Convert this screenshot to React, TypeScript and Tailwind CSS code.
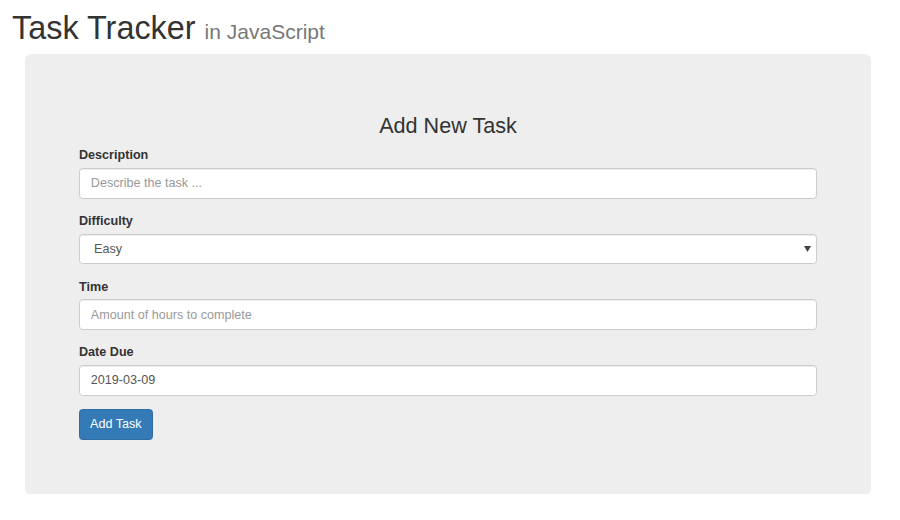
export default function App() {
  const inputCls =
    "block w-full h-[30.6px] px-[10.8px] text-[12.6px] text-[#555] bg-white border border-[#ccc] rounded-[3.6px] shadow-[inset_0_1px_1px_rgba(0,0,0,0.075)] placeholder:text-[#999] outline-none";
  const labelCls = "block mb-[3px] text-[12.6px] leading-[18.6px] font-bold text-[#333]";

  return (
    <div className="w-[900px] h-[520px] bg-white font-['Liberation_Sans',Arial,sans-serif] text-[#333]">
      <h1 className="pl-[12px] pt-[11px] text-[32.4px] leading-[1.1] text-[#333]">
        Task Tracker <span className="text-[21px] text-[#777]">in JavaScript</span>
      </h1>

      <div className="mx-[25px] mt-[7.36px] w-[846px] rounded-[5.4px] bg-[#eee] px-[54px] pt-[60px] pb-[54.4px]">
        <h3 className="mb-[8.64px] text-center text-[21.6px] leading-[23.76px] text-[#333]">Add New Task</h3>

        <form onSubmit={(e) => e.preventDefault()}>
          <div className="mb-[13.5px]">
            <label className={labelCls}>Description</label>
            <input type="text" className={inputCls} placeholder="Describe the task ..." />
          </div>

          <div className="mb-[13.5px]">
            <label className={labelCls}>Difficulty</label>
            <div className="relative">
              <select className={inputCls + " appearance-none pl-[14px]"} defaultValue="Easy">
                <option>Easy</option>
                <option>Medium</option>
                <option>Hard</option>
              </select>
              <svg
                className="pointer-events-none absolute right-[6px] top-[12px]"
                width="7"
                height="6"
                viewBox="0 0 7 6"
              >
                <path d="M0 0h7L3.5 6z" fill="#444" />
              </svg>
            </div>
          </div>

          <div className="mb-[13.5px]">
            <label className={labelCls}>Time</label>
            <input type="text" className={inputCls} placeholder="Amount of hours to complete" />
          </div>

          <div className="mb-[13.5px]">
            <label className={labelCls}>Date Due</label>
            <input type="text" className={inputCls} defaultValue="2019-03-09" />
          </div>

          <button
            type="submit"
            className="h-[30.6px] px-[10px] text-[12.6px] text-white bg-[#337ab7] border border-[#2e6da4] rounded-[3.6px]"
          >
            Add Task
          </button>
        </form>
      </div>
    </div>
  );
}
